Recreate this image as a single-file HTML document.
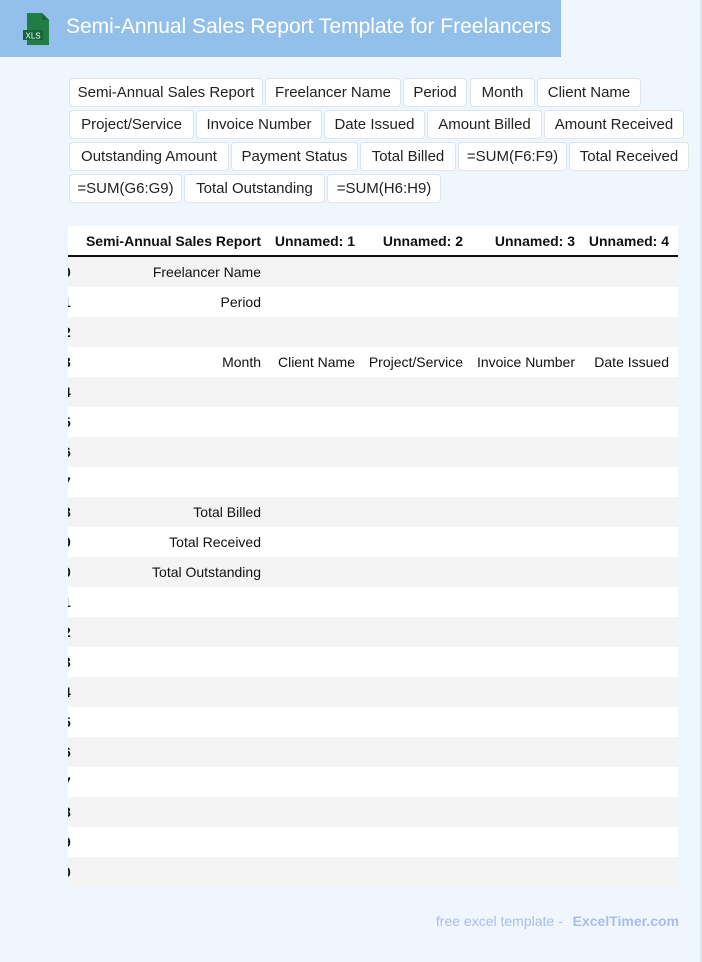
<!DOCTYPE html>
<html><head><meta charset="utf-8"><style>
*{margin:0;padding:0;box-sizing:border-box}
body{width:702px;height:962px;background:#f0f6fe;font-family:"Liberation Sans",Arial,sans-serif;position:relative;overflow:hidden;border-right:2px solid #dde6f0}
.hdr{position:absolute;left:0;top:0;width:561px;height:57px;background:#93c0eb}
.hdr .t{position:absolute;left:66px;top:15px;color:#fff;font-size:21px;white-space:nowrap}
.tag{position:absolute;height:29px;background:#fff;border:1px solid #dfe4ea;border-radius:4px;font-size:15px;line-height:27px;text-align:center;color:#222;white-space:nowrap}
.tbl{position:absolute;left:68px;top:226px;width:610px;overflow:hidden}
.row{position:relative;height:30px;font-size:14px;color:#111}
.row.g{background:#f4f4f4}.row.w{background:#fff}
.hd{height:31px;background:#fff;border-bottom:2px solid #111;font-weight:bold}
.c{position:absolute;top:0;line-height:30px;text-align:right;white-space:nowrap}
.idx{position:absolute;left:-5px;font-weight:bold;line-height:30px;font-size:14px}
.ft{position:absolute;right:21px;top:913px;font-size:14px;color:#a9bde8}
.ft b{margin-left:6px}
</style></head><body>
<div class="hdr">
<svg style="position:absolute;left:22px;top:13px" width="29" height="32" viewBox="0 0 29 32"><path d="M5 0h15l7 7v25H5z" fill="#1f7d45"/><path d="M20 0v7h7z" fill="#17663a"/><rect x="1" y="17" width="20" height="10" fill="#17663a"/><text x="3.5" y="25.5" font-size="8" fill="#fff" font-family="Liberation Sans">XLS</text></svg>
<div class="t">Semi-Annual Sales Report Template for Freelancers</div></div>

<div class="tag" style="left:69px;top:78px;width:194px">Semi-Annual Sales Report</div>
<div class="tag" style="left:265px;top:78px;width:136px">Freelancer Name</div>
<div class="tag" style="left:403px;top:78px;width:64px">Period</div>
<div class="tag" style="left:470px;top:78px;width:65px">Month</div>
<div class="tag" style="left:537px;top:78px;width:104px">Client Name</div>
<div class="tag" style="left:69px;top:110px;width:125px">Project/Service</div>
<div class="tag" style="left:196px;top:110px;width:126px">Invoice Number</div>
<div class="tag" style="left:324px;top:110px;width:101px">Date Issued</div>
<div class="tag" style="left:427px;top:110px;width:115px">Amount Billed</div>
<div class="tag" style="left:544px;top:110px;width:140px">Amount Received</div>
<div class="tag" style="left:69px;top:142px;width:160px">Outstanding Amount</div>
<div class="tag" style="left:231px;top:142px;width:127px">Payment Status</div>
<div class="tag" style="left:360px;top:142px;width:96px">Total Billed</div>
<div class="tag" style="left:458px;top:142px;width:109px">=SUM(F6:F9)</div>
<div class="tag" style="left:569px;top:142px;width:120px">Total Received</div>
<div class="tag" style="left:69px;top:174px;width:113px">=SUM(G6:G9)</div>
<div class="tag" style="left:184px;top:174px;width:141px">Total Outstanding</div>
<div class="tag" style="left:327px;top:174px;width:114px">=SUM(H6:H9)</div>

<div class="tbl">
<div class="row hd"><div class="c" style="right:417px;line-height:30px">Semi-Annual Sales Report</div><div class="c" style="right:323px">Unnamed: 1</div><div class="c" style="right:215px">Unnamed: 2</div><div class="c" style="right:103px">Unnamed: 3</div><div class="c" style="right:9px">Unnamed: 4</div></div>
<div class="row g"><span class="idx">0</span><div class="c" style="right:417px">Freelancer Name</div></div>
<div class="row w"><span class="idx">1</span><div class="c" style="right:417px">Period</div></div>
<div class="row g"><span class="idx">2</span></div>
<div class="row w"><span class="idx">3</span><div class="c" style="right:417px">Month</div><div class="c" style="right:323px">Client Name</div><div class="c" style="right:215px">Project/Service</div><div class="c" style="right:103px">Invoice Number</div><div class="c" style="right:9px">Date Issued</div></div>
<div class="row g"><span class="idx">4</span></div>
<div class="row w"><span class="idx">5</span></div>
<div class="row g"><span class="idx">6</span></div>
<div class="row w"><span class="idx">7</span></div>
<div class="row g"><span class="idx">8</span><div class="c" style="right:417px">Total Billed</div></div>
<div class="row w"><span class="idx">9</span><div class="c" style="right:417px">Total Received</div></div>
<div class="row g"><span class="idx">0</span><div class="c" style="right:417px">Total Outstanding</div></div>
<div class="row w"><span class="idx">1</span></div>
<div class="row g"><span class="idx">2</span></div>
<div class="row w"><span class="idx">3</span></div>
<div class="row g"><span class="idx">4</span></div>
<div class="row w"><span class="idx">5</span></div>
<div class="row g"><span class="idx">6</span></div>
<div class="row w"><span class="idx">7</span></div>
<div class="row g"><span class="idx">8</span></div>
<div class="row w"><span class="idx">9</span></div>
<div class="row g"><span class="idx">0</span></div>
</div>
<div class="ft">free excel template - <b>ExcelTimer.com</b></div>
</body></html>
